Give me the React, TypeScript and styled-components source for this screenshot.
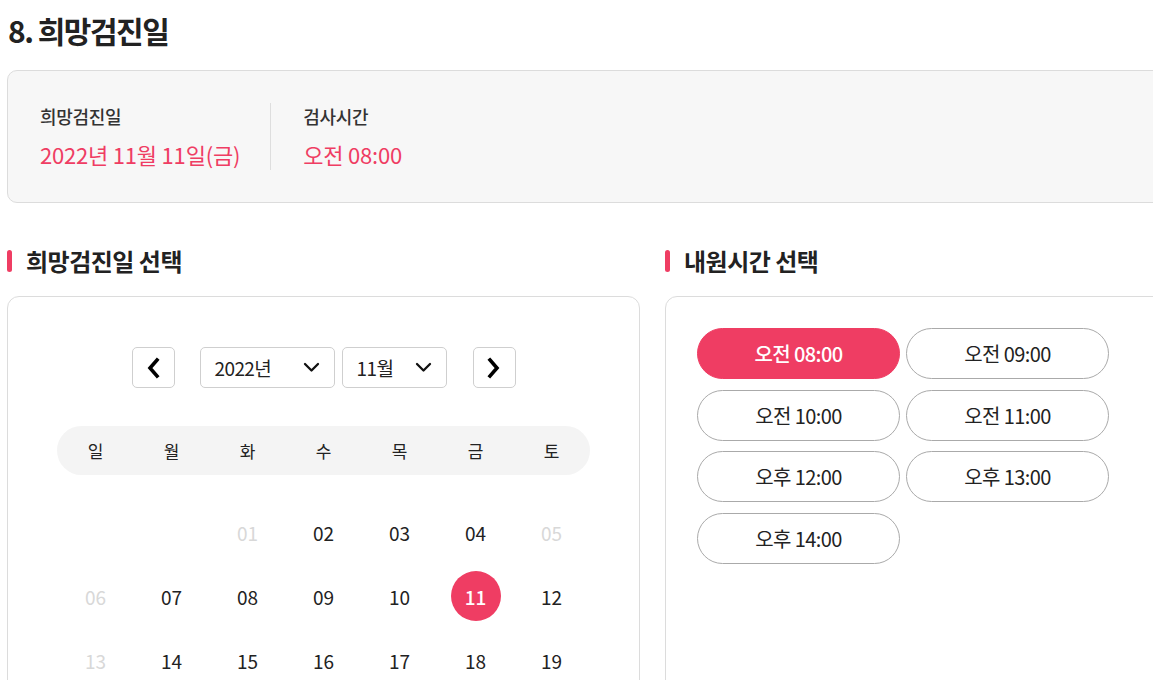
import React, { useState } from "react";
import styled, { createGlobalStyle, css } from "styled-components";

const Pink = "#ef3d63";

const GlobalStyle = createGlobalStyle`
    * { box-sizing: border-box; }
    body {
        margin: 0;
        overflow: hidden;
        background: #fff;
        color: #222;
        font-family: "Noto Sans CJK KR", "Noto Sans", sans-serif;
    }
`;

const Page = styled.div`
    width: 1305px;
    padding: 0 7px;
`;

const PageTitle = styled.h1`
    margin: 10px 0 0 1px;
    font-size: 30px;
    line-height: 40px;
    font-weight: 700;
    color: #222;
    letter-spacing: -1.5px;
`;

const Summary = styled.div`
    display: flex;
    margin-top: 20px;
    height: 133px;
    padding: 32px 32px;
    background: #f7f7f7;
    border: 1px solid #dcdcdc;
    border-radius: 10px;
`;

const SummaryItem = styled.div<{ $divider?: boolean }>`
    display: flex;
    flex-direction: column;
    padding-right: 30px;
    ${(p) =>
        p.$divider &&
        css`
            border-right: 1px solid #dedede;
            margin-right: 32px;
        `}
`;

const SummaryLabel = styled.span`
    font-size: 18px;
    line-height: 26px;
    font-weight: 500;
    color: #333;
    letter-spacing: -0.3px;
`;

const SummaryValue = styled.span`
    margin-top: 10px;
    font-size: 22px;
    line-height: 30px;
    color: ${Pink};
    letter-spacing: -0.2px;
`;

const Columns = styled.div`
    display: grid;
    grid-template-columns: 633px 633px;
    column-gap: 25px;
    margin-top: 41px;
`;

const SectionTitle = styled.h2`
    display: flex;
    align-items: center;
    gap: 14px;
    margin: 0 0 18px;
    font-size: 24px;
    line-height: 34px;
    font-weight: 700;
    color: #222;
    letter-spacing: -0.5px;

    &::before {
        content: "";
        display: block;
        width: 5px;
        height: 22px;
        border-radius: 3px;
        background: ${Pink};
    }
`;

const Card = styled.div<{ $pad: string }>`
    border: 1px solid #dcdcdc;
    border-radius: 12px;
    padding: ${(p) => p.$pad};
    height: 420px;
`;

const NavRow = styled.div`
    display: flex;
    justify-content: center;
    align-items: center;
`;

const NavButton = styled.button<{ $side: "left" | "right" }>`
    display: flex;
    align-items: center;
    justify-content: center;
    width: 43px;
    height: 41px;
    padding: 0;
    background: #fff;
    border: 1px solid #cfcfcf;
    border-radius: 5px;
    color: #000;
    margin: ${(p) => (p.$side === "left" ? "0 25px 0 0" : "0 0 0 26px")};
`;

const Select = styled.div<{ $width: number }>`
    display: flex;
    align-items: center;
    justify-content: space-between;
    width: ${(p) => p.$width}px;
    height: 41px;
    padding: 0 14px 0 14px;
    border: 1px solid #cfcfcf;
    border-radius: 5px;
    font-size: 19px;
    color: #222;
    letter-spacing: -0.6px;
    & + & {
        margin-left: 7px;
    }
`;

const WeekBar = styled.div`
    display: grid;
    grid-template-columns: repeat(7, 76px);
    justify-content: center;
    width: 533px;
    height: 49px;
    margin: 38px auto 0;
    background: #f4f4f4;
    border-radius: 25px;
    align-items: center;
    justify-items: center;
    font-size: 17px;
    color: #222;
`;

const DayGrid = styled.div`
    display: grid;
    grid-template-columns: repeat(7, 76px);
    justify-content: center;
    grid-auto-rows: 50px;
    row-gap: 14px;
    width: 534px;
    margin: 32px auto 0;
    justify-items: center;
    align-items: center;
`;

const Day = styled.div<{ $off?: boolean; $on?: boolean }>`
    display: flex;
    align-items: center;
    justify-content: center;
    width: 50px;
    height: 50px;
    border-radius: 50%;
    font-size: 19px;
    color: ${(p) => (p.$off ? "#d8d8d8" : "#222")};
    ${(p) =>
        p.$on &&
        css`
            background: ${Pink};
            color: #fff;
            font-weight: 500;
        `}
`;

const TimeGrid = styled.div`
    display: grid;
    grid-template-columns: 203px 203px;
    grid-auto-rows: 51px;
    column-gap: 6px;
    row-gap: 10.5px;
`;

const TimeButton = styled.button<{ $on?: boolean }>`
    height: 51px;
    border-radius: 26px;
    border: 1px solid #aaa;
    background: #fff;
    font-family: inherit;
    font-size: 20px;
    color: #222;
    letter-spacing: -0.6px;
    cursor: pointer;
    ${(p) =>
        p.$on &&
        css`
            border-color: ${Pink};
            background: ${Pink};
            color: #fff;
            font-weight: 500;
        `}
`;

const Chevron = ({ dir }: { dir: "left" | "right" }) => (
    <svg width="14" height="22" viewBox="0 0 14 22" fill="none">
        <path
            d={dir === "left" ? "M11 3 L4 11 L11 19" : "M3 3 L10 11 L3 19"}
            stroke="#000"
            strokeWidth="3.6"
            strokeLinecap="square"
            strokeLinejoin="miter"
        />
    </svg>
);

const Caret = () => (
    <svg width="17" height="11" viewBox="0 0 17 11" fill="none">
        <path
            d="M2 2 L8.5 8.5 L15 2"
            stroke="#111"
            strokeWidth="2.3"
            strokeLinecap="round"
            strokeLinejoin="round"
        />
    </svg>
);

const weekdays = ["일", "월", "화", "수", "목", "금", "토"];

const days: { n: string; off?: boolean }[] = [
    { n: "" },
    { n: "" },
    { n: "01", off: true },
    { n: "02" },
    { n: "03" },
    { n: "04" },
    { n: "05", off: true },
    { n: "06", off: true },
    { n: "07" },
    { n: "08" },
    { n: "09" },
    { n: "10" },
    { n: "11" },
    { n: "12" },
    { n: "13", off: true },
    { n: "14" },
    { n: "15" },
    { n: "16" },
    { n: "17" },
    { n: "18" },
    { n: "19" },
];

const times = [
    "오전 08:00",
    "오전 09:00",
    "오전 10:00",
    "오전 11:00",
    "오후 12:00",
    "오후 13:00",
    "오후 14:00",
];

function App() {
    const [time, setTime] = useState("오전 08:00");
    const [day] = useState("11");

    return (
        <Page>
            <GlobalStyle />
            <PageTitle>8. 희망검진일</PageTitle>

            <Summary>
                <SummaryItem $divider>
                    <SummaryLabel>희망검진일</SummaryLabel>
                    <SummaryValue>2022년 11월 {day}일(금)</SummaryValue>
                </SummaryItem>
                <SummaryItem>
                    <SummaryLabel>검사시간</SummaryLabel>
                    <SummaryValue>{time}</SummaryValue>
                </SummaryItem>
            </Summary>

            <Columns>
                <div>
                    <SectionTitle>희망검진일 선택</SectionTitle>
                    <Card $pad="50px 0 0">
                        <NavRow>
                            <NavButton $side="left">
                                <Chevron dir="left" />
                            </NavButton>
                            <Select $width={135}>
                                2022년
                                <Caret />
                            </Select>
                            <Select $width={105}>
                                11월
                                <Caret />
                            </Select>
                            <NavButton $side="right">
                                <Chevron dir="right" />
                            </NavButton>
                        </NavRow>
                        <WeekBar>
                            {weekdays.map((w) => (
                                <span key={w}>{w}</span>
                            ))}
                        </WeekBar>
                        <DayGrid>
                            {days.map((d, i) => (
                                <Day key={i} $off={d.off} $on={d.n === day}>
                                    {d.n}
                                </Day>
                            ))}
                        </DayGrid>
                    </Card>
                </div>
                <div>
                    <SectionTitle>내원시간 선택</SectionTitle>
                    <Card $pad="31px 31px">
                        <TimeGrid>
                            {times.map((t) => (
                                <TimeButton
                                    key={t}
                                    $on={t === time}
                                    onClick={() => setTime(t)}
                                >
                                    {t}
                                </TimeButton>
                            ))}
                        </TimeGrid>
                    </Card>
                </div>
            </Columns>
        </Page>
    );
}

export default App;
